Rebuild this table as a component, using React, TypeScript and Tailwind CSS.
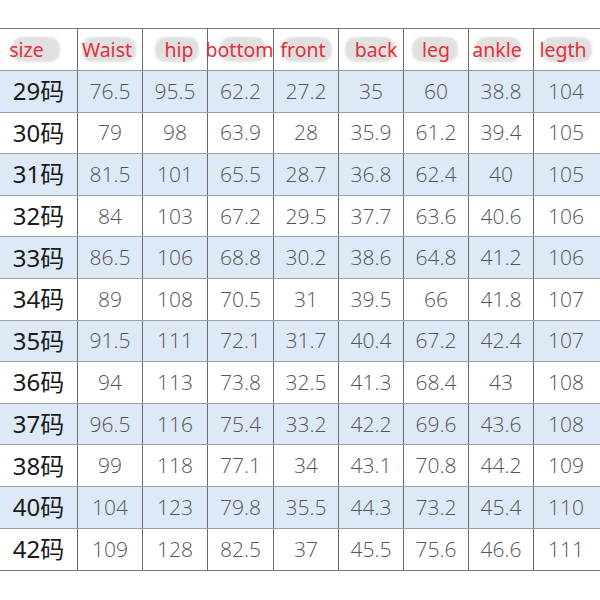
import React from "react";

const headers: { t: string; blob: string; dx: number }[] = [
  { t: "size", blob: "w-[48px] left-[12px]", dx: -12 },
  { t: "Waist", blob: "w-[54px] left-[4px]", dx: -3 },
  { t: "hip", blob: "w-[44px] left-[12px]", dx: 4 },
  { t: "bottom", blob: "w-[46px] left-[12px]", dx: -1 },
  { t: "front", blob: "w-[50px] left-[8px]", dx: -3 },
  { t: "back", blob: "w-[50px] left-[6px]", dx: 5 },
  { t: "leg", blob: "w-[46px] left-[8px]", dx: 0 },
  { t: "ankle", blob: "w-[46px] left-[6px]", dx: -4 },
  { t: "legth", blob: "w-[50px] left-[8px]", dx: -3 },
];

const rows: string[][] = [
  ["29码", "76.5", "95.5", "62.2", "27.2", "35", "60", "38.8", "104"],
  ["30码", "79", "98", "63.9", "28", "35.9", "61.2", "39.4", "105"],
  ["31码", "81.5", "101", "65.5", "28.7", "36.8", "62.4", "40", "105"],
  ["32码", "84", "103", "67.2", "29.5", "37.7", "63.6", "40.6", "106"],
  ["33码", "86.5", "106", "68.8", "30.2", "38.6", "64.8", "41.2", "106"],
  ["34码", "89", "108", "70.5", "31", "39.5", "66", "41.8", "107"],
  ["35码", "91.5", "111", "72.1", "31.7", "40.4", "67.2", "42.4", "107"],
  ["36码", "94", "113", "73.8", "32.5", "41.3", "68.4", "43", "108"],
  ["37码", "96.5", "116", "75.4", "33.2", "42.2", "69.6", "43.6", "108"],
  ["38码", "99", "118", "77.1", "34", "43.1", "70.8", "44.2", "109"],
  ["40码", "104", "123", "79.8", "35.5", "44.3", "73.2", "45.4", "110"],
  ["42码", "109", "128", "82.5", "37", "45.5", "75.6", "46.6", "111"],
];

const colW = ["w-[78px]", "w-[65px]", "w-[65px]", "w-[66px]", "w-[65px]", "w-[65px]", "w-[65px]", "w-[65px]", "w-[64px]"];

export default function App() {
  return (
    <div className="w-[600px] h-[600px] bg-white overflow-hidden pt-[28px]">
      <div className="border-t border-b border-[#7a7a7a]">
        <div className="flex h-[42px] border-b border-[#9a9a9a]">
          {headers.map((h, i) => (
            <div
              key={i}
              className={`${colW[i]} relative flex items-center justify-center ${i < 8 ? "border-r border-[#6a6a6a]" : ""}`}
            >
              <span className={`absolute top-[8px] h-[25px] ${h.blob} rounded-[10px] bg-[#d4d4d4] opacity-70 blur-[1px]`} />
              <span
                className="relative text-[19.5px] leading-none text-[#e0323c] whitespace-nowrap"
                style={{ transform: `translateX(${h.dx}px)`, fontFamily: '"Noto Sans", "Open Sans", sans-serif' }}
              >
                {h.t}
              </span>
            </div>
          ))}
        </div>
        {rows.map((r, ri) => (
          <div
            key={ri}
            className={`flex h-[41.6px] ${ri < rows.length - 1 ? "border-b border-[#a0a0a0]" : ""} ${ri % 2 === 0 ? "bg-[#dde9f6]" : "bg-white"}`}
          >
            {r.map((c, ci) => (
              <div
                key={ci}
                className={`${colW[ci]} flex items-center justify-center ${ci < 8 ? "border-r border-[#6a6a6a]" : ""}`}
              >
                {ci === 0 ? (
                  <span
                    className="text-[24px] text-[#1a1a1a] font-normal leading-none"
                    style={{ fontFamily: '"Noto Sans", "Noto Sans CJK SC", sans-serif' }}
                  >
                    {c}
                  </span>
                ) : (
                  <span
                    className="text-[21px] text-[#555] font-light leading-none"
                    style={{ fontFamily: '"Open Sans", "Noto Sans", sans-serif' }}
                  >
                    {c}
                  </span>
                )}
              </div>
            ))}
          </div>
        ))}
      </div>
    </div>
  );
}
